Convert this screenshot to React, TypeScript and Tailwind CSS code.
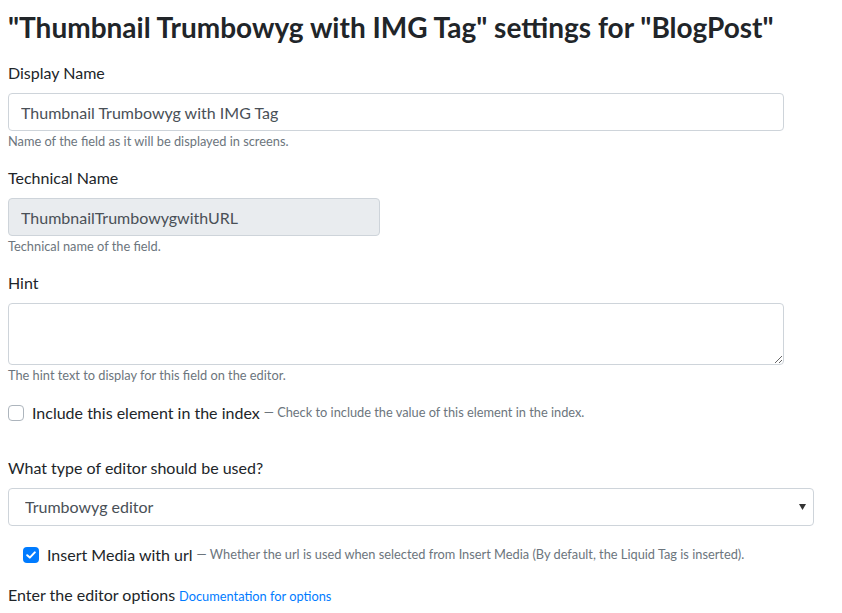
export default function App() {
  return (
    <div className="min-h-screen bg-white text-[#212529] font-['Lato',sans-serif]">
      <div className="px-2 pt-[10px]">
        <h2 className="text-[28px] font-bold leading-[34px]">
          "Thumbnail Trumbowyg with IMG Tag" settings for "BlogPost"
        </h2>

        <div className="mt-[17px] mb-[15px]">
          <label className="block text-base leading-6 mb-2">Display Name</label>
          <input
            type="text"
            defaultValue="Thumbnail Trumbowyg with IMG Tag"
            className="block w-[776px] h-[38px] px-3 text-base text-[#495057] border border-[#ced4da] rounded-[4px] bg-white outline-none"
          />
          <small className="block mt-[1px] text-[12.8px] leading-[19px] text-[#6c757d]">
            Name of the field as it will be displayed in screens.
          </small>
        </div>

        <div className="mb-[15px]">
          <label className="block text-base leading-6 mb-2">Technical Name</label>
          <input
            type="text"
            readOnly
            defaultValue="ThumbnailTrumbowygwithURL"
            className="block w-[372px] h-[38px] px-3 text-base text-[#495057] border border-[#ced4da] rounded-[4px] bg-[#e9ecef] outline-none"
          />
          <small className="block mt-[1px] text-[12.8px] leading-[19px] text-[#6c757d]">
            Technical name of the field.
          </small>
        </div>

        <div className="mb-[16px]">
          <label className="block text-base leading-6 mb-2">Hint</label>
          <textarea
            className="block w-[776px] h-[62px] px-3 py-1.5 text-base text-[#495057] border border-[#ced4da] rounded-[4px] bg-white outline-none resize-y"
          />
          <small className="block mt-[1px] text-[12.8px] leading-[19px] text-[#6c757d]">
            The hint text to display for this field on the editor.
          </small>
        </div>

        <div className="flex items-center h-6 mb-[31px]">
          <span className="w-4 h-4 rounded-[4px] border border-[#adb5bd] bg-white shrink-0" />
          <span className="ml-2 text-base leading-6">Include this element in the index</span>
          <span className="ml-1 text-[12.8px] text-[#6c757d]">
            — Check to include the value of this element in the index.
          </span>
        </div>

        <div className="mb-[17px]">
          <label className="block text-base leading-6 mb-2">What type of editor should be used?</label>
          <div className="relative w-[806px]">
            <select className="block w-full h-[38px] pl-4 pr-8 text-base text-[#495057] border border-[#ced4da] rounded-[4px] bg-white outline-none appearance-none">
              <option>Trumbowyg editor</option>
            </select>
            <svg
              className="absolute right-[8px] top-[16px] pointer-events-none"
              width="7"
              height="6"
              viewBox="0 0 7 6"
            >
              <path d="M0 0 L7 0 L3.5 6 Z" fill="#333" />
            </svg>
          </div>
        </div>

        <div className="flex items-center h-6 pl-[15px] mb-[16px]">
          <span className="w-4 h-4 rounded-[4px] bg-[#007bff] flex items-center justify-center shrink-0">
            <svg width="10" height="8" viewBox="0 0 10 8" fill="none">
              <path d="M1.2 4.2 L3.8 6.6 L8.8 1.4" stroke="white" strokeWidth="2" strokeLinecap="round" strokeLinejoin="round" />
            </svg>
          </span>
          <span className="ml-2 text-base leading-6">Insert Media with url</span>
          <span className="ml-1 text-[12.8px] text-[#6c757d]">
            — Whether the url is used when selected from Insert Media (By default, the Liquid Tag is inserted).
          </span>
        </div>

        <div className="flex items-baseline">
          <span className="text-base leading-6">Enter the editor options</span>
          <a href="#" className="ml-1 text-[12.8px] text-[#007bff]">
            Documentation for options
          </a>
        </div>
      </div>
    </div>
  );
}
